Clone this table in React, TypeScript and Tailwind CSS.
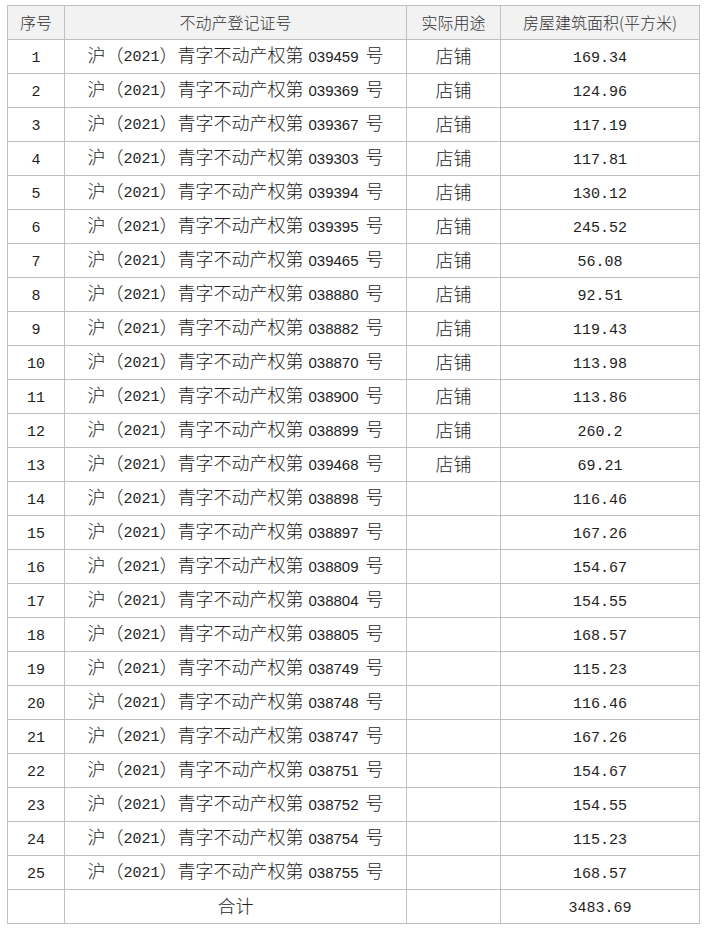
import React from "react";

const rows: [string, string, string][] = [
  ["039459", "店铺", "169.34"],
  ["039369", "店铺", "124.96"],
  ["039367", "店铺", "117.19"],
  ["039303", "店铺", "117.81"],
  ["039394", "店铺", "130.12"],
  ["039395", "店铺", "245.52"],
  ["039465", "店铺", "56.08"],
  ["038880", "店铺", "92.51"],
  ["038882", "店铺", "119.43"],
  ["038870", "店铺", "113.98"],
  ["038900", "店铺", "113.86"],
  ["038899", "店铺", "260.2"],
  ["039468", "店铺", "69.21"],
  ["038898", "", "116.46"],
  ["038897", "", "167.26"],
  ["038809", "", "154.67"],
  ["038804", "", "154.55"],
  ["038805", "", "168.57"],
  ["038749", "", "115.23"],
  ["038748", "", "116.46"],
  ["038747", "", "167.26"],
  ["038751", "", "154.67"],
  ["038752", "", "154.55"],
  ["038754", "", "115.23"],
  ["038755", "", "168.57"],
];

const cjk = "font-['Noto_Sans_CJK_SC',sans-serif] font-light";
const mono = "font-['Liberation_Mono','Noto_Sans_CJK_SC',monospace] text-[15px]";
const sans = "font-['Liberation_Sans','Noto_Sans_CJK_SC',sans-serif] text-[15px]";
const cell =
  "h-[34px] border-r border-b border-[#c0c0c0] flex items-center justify-center whitespace-nowrap";

export default function App() {
  return (
    <div className="w-[706px] h-[929px] bg-white pt-[5px] pl-[7px]">
      <div className="grid grid-cols-[57px_342px_94px_199px] w-[693px] border-l border-t border-[#c0c0c0] text-[#1e1e1e]">
        {/* header */}
        <div className={`${cell} bg-[#f2f2f2] text-[#333] text-[16px] pb-[1px] ${cjk}`}>序号</div>
        <div className={`${cell} bg-[#f2f2f2] text-[#333] text-[16px] pb-[1px] ${cjk}`}>不动产登记证号</div>
        <div className={`${cell} bg-[#f2f2f2] text-[#333] text-[16px] pb-[1px] ${cjk}`}>实际用途</div>
        <div className={`${cell} bg-[#f2f2f2] text-[#333] text-[16px] pb-[1px] ${cjk}`}>房屋建筑面积(平方米)</div>

        {rows.map(([no, use, area], i) => (
          <React.Fragment key={i}>
            <div className={`${cell} pt-[5px] ${mono}`}>{i + 1}</div>
            <div className={`${cell} text-[18px] pb-[2px] ${cjk}`}>
              <span>
                沪（<span className={`${mono} align-[1px]`}>2021</span>）青字不动产权第{" "}
                <span className={`${sans} ml-[1px] mr-[3px]`}>{no}</span> 号
              </span>
            </div>
            <div className={`${cell} text-[18px] pb-[2px] ${cjk}`}>{use}</div>
            <div className={`${cell} pt-[5px] ${mono}`}>{area}</div>
          </React.Fragment>
        ))}

        <div className={cell}></div>
        <div className={`${cell} text-[18px] pb-[2px] ${cjk}`}>合计</div>
        <div className={cell}></div>
        <div className={`${cell} pt-[5px] ${mono}`}>3483.69</div>
      </div>
    </div>
  );
}
